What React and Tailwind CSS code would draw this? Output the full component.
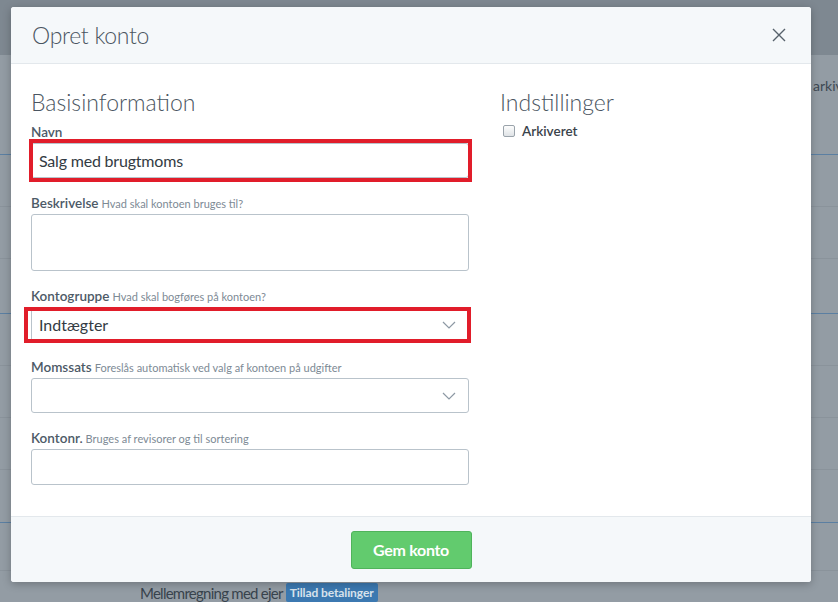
import React from 'react';

const Chevron = () => (
  <svg width="14" height="8" viewBox="0 0 14 8" className="shrink-0">
    <polyline points="1,1 7,7 13,1" fill="none" stroke="#8d99a4" strokeWidth="1.2" />
  </svg>
);

const Label = ({ title, hint }) => (
  <div className="h-[18px] leading-[18px] whitespace-nowrap">
    <span className="text-[13.5px] font-semibold text-[#4d5a67]">{title}</span>
    {hint && <span className="ml-[3px] text-[11px] text-[#7d8a95]">{hint}</span>}
  </div>
);

const Marker = ({ className }) => (
  <div className={`absolute border-[4px] border-[#e11d2a] pointer-events-none ${className}`} />
);

const bgRows = [
  { h: 'h-[52px]', line: 'border-[#5b7fa2]' },
  { h: 'h-[52px]', line: 'border-[#8a939b]' },
  { h: 'h-[55px]', line: 'border-[#8a939b]' },
  { h: 'h-[52px]', line: 'border-[#5b7fa2]' },
  { h: 'h-[52px]', line: 'border-[#8a939b]' },
  { h: 'h-[52px]', line: 'border-[#8a939b]' },
  { h: 'h-[53px]', line: 'border-[#8a939b]' },
  { h: 'h-[48px]', line: 'border-[#5b7fa2]' },
];

export default function App() {
  return (
    <div className="relative w-[838px] h-[602px] overflow-hidden bg-[#939ca4] font-['Lato','Liberation_Sans',sans-serif]">
      {/* dimmed page behind the dialog */}
      <div className="flex flex-col">
        <div className="h-[55px] shrink-0 bg-[#7e8891]" />
        <div className="h-[99px] shrink-0 pt-[22px] pl-[813px] text-[14px] leading-[18px] text-[#3e4953] whitespace-nowrap">
          arkiveret
        </div>
        {bgRows.map((r, i) => (
          <div key={i} className={`${r.h} shrink-0 border-t ${r.line}`} />
        ))}
        <div className="h-[40px] shrink-0 border-t border-[#8a939b] pl-[140px] pt-[12px] flex items-start gap-[3px]">
          <span className="text-[15px] leading-[20px] text-[#38434d] tracking-[-0.75px]">Mellemregning med ejer</span>
          <span className="h-[19px] px-[4px] rounded-[2px] bg-[#3c79b1] text-[12px] font-bold leading-[19px] text-[#d7e2ec] tracking-[-0.1px]">Tillad betalinger</span>
        </div>
      </div>

      {/* dialog */}
      <div className="absolute left-[11px] top-[7px] w-[800px] bg-white rounded-[3px] shadow-[0_2px_8px_rgba(0,0,0,0.25)] flex flex-col">
        <div className="h-[57px] px-[21px] flex items-center justify-between bg-[#f5f8fa] border-b border-[#e3e8ec] rounded-t-[3px]">
          <span className="text-[23px] font-light text-[#4a5561] tracking-[-0.3px]">Opret konto</span>
          <svg width="14" height="14" viewBox="0 0 14 14" className="mr-[4px]">
            <path d="M1 1L13 13M13 1L1 13" stroke="#56616b" strokeWidth="1.4" />
          </svg>
        </div>

        <div className="px-[20px] pt-[25px] pb-[31px] flex gap-[31px]">
          <div className="w-[438px] flex flex-col">
            <h2 className="text-[23px] font-light leading-[26px] text-[#4a5561] mb-[7px]">Basisinformation</h2>

            <Label title="Navn" />
            <div className="relative mt-[3px] mb-[15px]">
              <div className="h-[35px] border border-[#b9c3cb] rounded-[3px] px-[7px] flex items-center text-[16px] text-[#333b43] tracking-[-0.2px]">Salg med brugtmoms</div>
              <Marker className="-top-[4px] -bottom-[4px] -left-[2px] -right-[3px]" />
            </div>

            <Label title="Beskrivelse" hint="Hvad skal kontoen bruges til?" />
            <div className="mt-[3px] mb-[15px] h-[57px] border border-[#b9c3cb] rounded-[3px]" />

            <Label title="Kontogruppe" hint="Hvad skal bogføres på kontoen?" />
            <div className="relative mt-[3px] mb-[15px]">
              <div className="h-[35px] border border-[#b9c3cb] rounded-[3px] pl-[7px] pr-[12px] flex items-center justify-between text-[16px] text-[#333b43]">
                <span>Indtægter</span>
                <Chevron />
              </div>
              <Marker className="top-0 -bottom-[1px] -left-[7px] -right-[2px]" />
            </div>

            <Label title="Momssats" hint="Foreslås automatisk ved valg af kontoen på udgifter" />
            <div className="mt-[3px] mb-[15px] h-[35px] border border-[#b9c3cb] rounded-[3px] pr-[12px] flex items-center justify-end">
              <Chevron />
            </div>

            <Label title="Kontonr." hint="Bruges af revisorer og til sortering" />
            <div className="mt-[3px] h-[36px] border border-[#b9c3cb] rounded-[3px]" />
          </div>

          <div className="flex-1 flex flex-col">
            <h2 className="text-[23px] font-light leading-[26px] text-[#4a5561] mb-[7px]">Indstillinger</h2>
            <label className="h-[18px] flex items-center gap-[7px] pl-[3px]">
              <span className="w-[12px] h-[12px] rounded-[2px] border border-[#9aa3ab] bg-gradient-to-b from-[#fdfdfd] to-[#dfe3e6]" />
              <span className="text-[13.5px] font-semibold text-[#3a434b]">Arkiveret</span>
            </label>
          </div>
        </div>

        <div className="h-[66px] bg-[#f5f8fa] border-t border-[#e3e8ec] rounded-b-[3px] flex items-center justify-center">
          <button className="w-[121px] h-[38px] rounded-[3px] bg-[#62cb6e] border border-[#4fb35b] text-[16px] font-bold text-white tracking-[-0.3px]">
            Gem konto
          </button>
        </div>
      </div>
    </div>
  );
}
